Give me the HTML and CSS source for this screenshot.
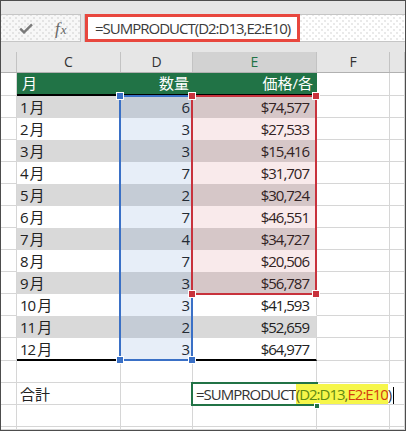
FILE: index.html
```html
<!DOCTYPE html>
<html lang="ja">
<head>
<meta charset="utf-8">
<title>SUMPRODUCT</title>
<link rel="stylesheet" href="styles.css">
</head>
<body>
<div class="window">
  <div class="ribbon-edge"></div>

  <div class="formula-bar">
    <div class="fx-buttons">
      <svg class="icon-check" width="14" height="11" viewBox="0 0 14 11" aria-hidden="true">
        <polyline points="1.2,5.6 5,9.4 13,1.4" fill="none" stroke="#7a7a7a" stroke-width="2.4" stroke-linejoin="miter"/>
      </svg>
      <span class="fx"><span class="fx-f">f</span><span class="fx-x">x</span></span>
    </div>
    <div class="formula-input">
      <div class="formula-text">=SUMPRODUCT(D2:D13,E2:E10)</div>
    </div>
  </div>

  <div class="col-headers">
    <div class="ch"></div>
    <div class="ch">C</div>
    <div class="ch">D</div>
    <div class="ch sel">E</div>
    <div class="ch">F</div>
    <div class="ch"></div>
  </div>

  <div class="sheet">
    <div class="row head">
      <div class="c"></div><div class="c t">月</div><div class="c t qty">数量</div><div class="c t price hd">価格/各</div><div class="c"></div><div class="c"></div>
    </div>
    <div class="row band">
      <div class="c"></div><div class="c t month">1<span class="m">月</span></div><div class="c t qty">6</div><div class="c t price">$74,577</div><div class="c"></div><div class="c"></div>
    </div>
    <div class="row">
      <div class="c"></div><div class="c t month">2<span class="m">月</span></div><div class="c t qty">3</div><div class="c t price">$27,533</div><div class="c"></div><div class="c"></div>
    </div>
    <div class="row band">
      <div class="c"></div><div class="c t month">3<span class="m">月</span></div><div class="c t qty">3</div><div class="c t price">$15,416</div><div class="c"></div><div class="c"></div>
    </div>
    <div class="row">
      <div class="c"></div><div class="c t month">4<span class="m">月</span></div><div class="c t qty">7</div><div class="c t price">$31,707</div><div class="c"></div><div class="c"></div>
    </div>
    <div class="row band">
      <div class="c"></div><div class="c t month">5<span class="m">月</span></div><div class="c t qty">2</div><div class="c t price">$30,724</div><div class="c"></div><div class="c"></div>
    </div>
    <div class="row">
      <div class="c"></div><div class="c t month">6<span class="m">月</span></div><div class="c t qty">7</div><div class="c t price">$46,551</div><div class="c"></div><div class="c"></div>
    </div>
    <div class="row band">
      <div class="c"></div><div class="c t month">7<span class="m">月</span></div><div class="c t qty">4</div><div class="c t price">$34,727</div><div class="c"></div><div class="c"></div>
    </div>
    <div class="row">
      <div class="c"></div><div class="c t month">8<span class="m">月</span></div><div class="c t qty">7</div><div class="c t price">$20,506</div><div class="c"></div><div class="c"></div>
    </div>
    <div class="row band">
      <div class="c"></div><div class="c t month">9<span class="m">月</span></div><div class="c t qty">3</div><div class="c t price">$56,787</div><div class="c"></div><div class="c"></div>
    </div>
    <div class="row">
      <div class="c"></div><div class="c t month">10<span class="m">月</span></div><div class="c t qty">3</div><div class="c t price">$41,593</div><div class="c"></div><div class="c"></div>
    </div>
    <div class="row band">
      <div class="c"></div><div class="c t month">11<span class="m">月</span></div><div class="c t qty">2</div><div class="c t price">$52,659</div><div class="c"></div><div class="c"></div>
    </div>
    <div class="row last">
      <div class="c"></div><div class="c t month">12<span class="m">月</span></div><div class="c t qty">3</div><div class="c t price">$64,977</div><div class="c"></div><div class="c"></div>
    </div>
    <div class="row">
      <div class="c"></div><div class="c"></div><div class="c"></div><div class="c"></div><div class="c"></div><div class="c"></div>
    </div>
    <div class="row">
      <div class="c"></div><div class="c label">合計</div><div class="c"></div><div class="c editing"><span class="edit">=SUMPRODUCT<span class="hl">(<span class="ref-d">D2:D13</span>,<span class="ref-e">E2:E10</span></span>)<span class="caret"></span></span></div><div class="c"></div><div class="c"></div>
    </div>
    <div class="row">
      <div class="c"></div><div class="c"></div><div class="c"></div><div class="c"></div><div class="c"></div><div class="c"></div>
    </div>
    <div class="row">
      <div class="c"></div><div class="c"></div><div class="c"></div><div class="c"></div><div class="c"></div><div class="c"></div>
    </div>

    <div class="range range-d">
      <span class="handle tl"></span><span class="handle bl"></span><span class="handle br"></span>
    </div>
    <div class="range range-e">
      <span class="handle tl"></span><span class="handle tr"></span><span class="handle bl"></span><span class="handle br"></span>
    </div>
    <div class="range range-edit">
      <span class="handle fill"></span>
    </div>
  </div>
</div>
</body>
</html>
```

FILE: styles.css
```css
* {
  box-sizing: border-box;
}

html,
body {
  margin: 0;
  padding: 0;
  background: #ffffff;
}

body {
  font-family: "Open Sans", "Noto Sans CJK JP", sans-serif;
  color: #222222;
}

.window {
  width: 406px;
  height: 431px;
  border: 1px solid #4d4d4d;
  background: #e6e6e6;
  display: flex;
  flex-direction: column;
  overflow: hidden;
}

.ribbon-edge {
  flex: none;
  height: 13px;
}

/* formula bar */
.formula-bar {
  flex: none;
  height: 28px;
  display: flex;
}

.fx-buttons {
  width: 80px;
  display: flex;
  align-items: center;
  padding-left: 18px;
  border-top: 1px solid #c6c6c6;
  border-bottom: 1px solid #c6c6c6;
  border-right: 1px solid #c6c6c6;
  background-color: #f7f7f7;
  background-image: radial-gradient(circle, #dcdcdc 0.6px, transparent 1px),
    radial-gradient(circle, #dcdcdc 0.6px, transparent 1px);
  background-size: 6px 6px;
  background-position: 0 0, 3px 3px;
}

.icon-check {
  display: block;
  margin-top: 1px;
}

.fx {
  margin-left: 22px;
  font-family: "Liberation Serif", serif;
  font-style: italic;
  color: #666666;
  line-height: 1;
  white-space: nowrap;
}

.fx-f {
  font-size: 17px;
}

.fx-x {
  font-size: 13px;
  margin-left: 1px;
}

.formula-input {
  flex: 1;
  margin-left: 3px;
  display: flex;
  border-top: 1px solid #c6c6c6;
  border-bottom: 1px solid #c6c6c6;
  border-left: 1px solid #c6c6c6;
  background-color: #ffffff;
  background-image: radial-gradient(circle, #e2e2e2 0.6px, transparent 1px),
    radial-gradient(circle, #e2e2e2 0.6px, transparent 1px);
  background-size: 6px 6px;
  background-position: 0 0, 3px 3px;
}

.formula-text {
  width: 215px;
  margin: -1px 0;
  border: 3px solid #e8473e;
  padding-left: 7px;
  font-size: 15px;
  letter-spacing: -1px;
  line-height: 22px;
  color: #3a3a3a;
  white-space: nowrap;
  background: #ffffff;
}

/* column headers */
.col-headers {
  flex: none;
  margin-top: 10px;
  height: 21px;
  display: grid;
  grid-template-columns: 16px 104px 72px 124px 73px 15px;
  border-bottom: 1px solid #b1b1b1;
}

.ch {
  border-right: 1px solid #c3c3c3;
  text-align: center;
  font-size: 14px;
  line-height: 20px;
  color: #333333;
}

.ch.sel {
  background: #d2d2d2;
  color: #217346;
}

/* sheet grid */
.sheet {
  flex: none;
  position: relative;
  display: grid;
  grid-template-columns: 16px 104px 72px 124px 73px 15px;
  grid-template-rows: 23px repeat(11, 22px) 23px repeat(3, 22px) 3px;
  background: #ffffff;
}

.row {
  display: contents;
}

.c {
  border-right: 1px solid #d6d6d6;
  border-bottom: 1px solid #d6d6d6;
  background: #ffffff;
  padding: 0 3px;
  font-size: 15px;
  letter-spacing: -1px;
  line-height: 22px;
  white-space: nowrap;
  color: #222222;
}

.t {
  border-right-color: transparent;
  border-bottom-color: transparent;
}

.t.price {
  border-right-color: #d6d6d6;
  text-align: right;
  padding-right: 7px;
}

.t.qty {
  text-align: right;
  padding-right: 3px;
}

.month .m {
  margin-left: 2px;
  letter-spacing: 0;
}

.label {
  letter-spacing: 0;
}

.row.band > .t {
  background: #d9d9d9;
}

.row.head > .t {
  background: #217346;
  color: #ffffff;
  border-bottom: 2px solid #000000;
  border-right-color: transparent;
  line-height: 21px;
  font-size: 15px;
  letter-spacing: 0;
}

.row.head > .t:nth-child(2) {
  padding-left: 5px;
}

.row.head > .t.price {
  padding-right: 3px;
}

.row.last > .t {
  border-bottom: 2px solid #000000;
}

.editing {
  position: relative;
  z-index: 1;
  overflow: visible;
}

.edit {
  background: #ffffff;
  color: #333333;
}

.hl {
  background: #f6f64a;
  color: #5e6a1a;
}

.ref-d {
  color: #5f8a12;
}

.ref-e {
  color: #d23c10;
}

.caret {
  display: inline-block;
  width: 1px;
  height: 17px;
  margin-left: 2px;
  vertical-align: -4px;
  background: #000000;
}

/* range highlights overlay the cells */
.range {
  position: absolute;
  z-index: 2;
  pointer-events: none;
}

.range-d {
  grid-column: 3 / 4;
  grid-row: 2 / 14;
  top: -1px;
  left: -2px;
  right: 0;
  bottom: 0;
  border: 2px solid #3a70c6;
  background: rgba(58, 112, 198, 0.12);
  color: #3a70c6;
}

.range-e {
  grid-column: 4 / 5;
  grid-row: 2 / 11;
  top: -1px;
  left: -2px;
  right: 0;
  bottom: -1px;
  border: 2px solid #c8323c;
  background: rgba(200, 50, 60, 0.1);
  color: #c8323c;
}

.range-edit {
  grid-column: 4 / 5;
  grid-row: 15 / 16;
  top: -1px;
  left: -2px;
  right: -1px;
  bottom: -1px;
  border: 2px solid #217346;
  border-right: none;
  color: #217346;
}

.handle {
  position: absolute;
  width: 8px;
  height: 8px;
  border: 1px solid #ffffff;
  background: currentColor;
}

.handle.tl {
  top: -5px;
  left: -5px;
}

.handle.tr {
  top: -5px;
  right: -5px;
}

.handle.bl {
  bottom: -5px;
  left: -5px;
}

.handle.br {
  bottom: -5px;
  right: -5px;
}

.handle.fill {
  width: 6px;
  height: 6px;
  right: -2px;
  bottom: -5px;
}
```
